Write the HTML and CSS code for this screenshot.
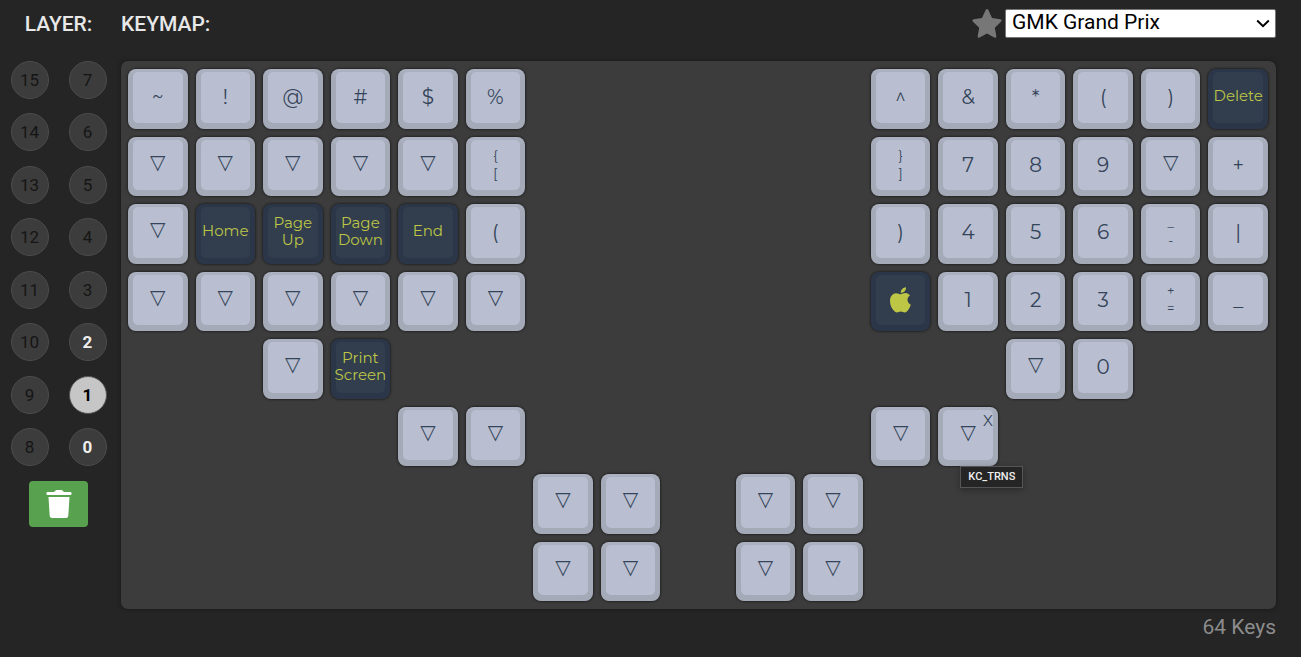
FILE: index.html
```html
<!DOCTYPE html>
<html lang="en">
<head>
<meta charset="utf-8">
<meta name="viewport" content="width=device-width, initial-scale=1">
<title>Keymap</title>
<link rel="stylesheet" href="styles.css">
</head>
<body>
<main class="configurator">
  <aside class="layers">
    <h2 class="heading layers-heading">LAYER:</h2>
    <div class="layer-list">
      <button class="layer" type="button">15</button><button class="layer" type="button">7</button>
      <button class="layer" type="button">14</button><button class="layer" type="button">6</button>
      <button class="layer" type="button">13</button><button class="layer" type="button">5</button>
      <button class="layer" type="button">12</button><button class="layer" type="button">4</button>
      <button class="layer" type="button">11</button><button class="layer" type="button">3</button>
      <button class="layer" type="button">10</button><button class="layer used" type="button">2</button>
      <button class="layer" type="button">9</button><button class="layer active" type="button" aria-pressed="true">1</button>
      <button class="layer" type="button">8</button><button class="layer used" type="button">0</button>
    </div>
    <button class="clear" type="button" aria-label="Clear layer">
      <svg class="clear-icon" viewBox="0 0 26 28" aria-hidden="true"><path d="M1.500 2H8L9.500 0.500Q10 0 10.700 0H15.300Q16 0 16.500 0.500L18 2H24.500Q25.500 2 25.500 3V4Q25.500 5 24.500 5H1.500Q0.500 5 0.500 4V3Q0.500 2 1.500 2ZM2.500 7H23.500L22.300 26Q22.100 28 20 28H6Q3.900 28 3.700 26Z"/></svg>
    </button>
  </aside>
  <section class="keymap">
    <header class="toolbar">
      <h2 class="heading">KEYMAP:</h2>
      <div class="theme">
        <svg class="star" viewBox="0 0 30 29" role="img" aria-label="Favorite"><path d="M13.500 1.200Q15 -1 16.500 1.200L20 9 28.200 10.200Q30.600 10.700 29 12.700L22.800 18.700 24.300 27Q24.500 29.400 22.300 28.400L15 24.500 7.700 28.400Q5.500 29.400 5.700 27L7.200 18.700 1 12.700Q-0.600 10.700 1.800 10.200L10 9Z"/></svg>
        <div class="select-wrap">
          <select class="theme-select" aria-label="Keycap theme"><option>GMK Grand Prix</option></select>
          <svg class="chevron" viewBox="0 0 14 9" aria-hidden="true"><path d="M1.200 1.500 7 7.200 12.800 1.500"/></svg>
        </div>
      </div>
    </header>
    <div class="board">
      <button class="key" type="button"><span class="face">~</span></button>
      <button class="key" type="button"><span class="face">!</span></button>
      <button class="key" type="button"><span class="face">@</span></button>
      <button class="key" type="button"><span class="face">#</span></button>
      <button class="key" type="button"><span class="face">$</span></button>
      <button class="key" type="button"><span class="face">%</span></button>
      <button class="key col-12" type="button"><span class="face">^</span></button>
      <button class="key" type="button"><span class="face">&amp;</span></button>
      <button class="key" type="button"><span class="face">*</span></button>
      <button class="key" type="button"><span class="face">(</span></button>
      <button class="key" type="button"><span class="face">)</span></button>
      <button class="key accent" type="button"><span class="face word">Delete</span></button>

      <button class="key" type="button"><span class="face trns">▽</span></button>
      <button class="key" type="button"><span class="face trns">▽</span></button>
      <button class="key" type="button"><span class="face trns">▽</span></button>
      <button class="key" type="button"><span class="face trns">▽</span></button>
      <button class="key" type="button"><span class="face trns">▽</span></button>
      <button class="key" type="button"><span class="face pair">{<br>[</span></button>
      <button class="key col-12" type="button"><span class="face pair">}<br>]</span></button>
      <button class="key" type="button"><span class="face">7</span></button>
      <button class="key" type="button"><span class="face">8</span></button>
      <button class="key" type="button"><span class="face">9</span></button>
      <button class="key" type="button"><span class="face trns">▽</span></button>
      <button class="key" type="button"><span class="face">+</span></button>

      <button class="key" type="button"><span class="face trns">▽</span></button>
      <button class="key accent" type="button"><span class="face word">Home</span></button>
      <button class="key accent" type="button"><span class="face word">Page<br>Up</span></button>
      <button class="key accent" type="button"><span class="face word">Page<br>Down</span></button>
      <button class="key accent" type="button"><span class="face word">End</span></button>
      <button class="key" type="button"><span class="face">(</span></button>
      <button class="key col-12" type="button"><span class="face">)</span></button>
      <button class="key" type="button"><span class="face">4</span></button>
      <button class="key" type="button"><span class="face">5</span></button>
      <button class="key" type="button"><span class="face">6</span></button>
      <button class="key" type="button"><span class="face pair">_<br>-</span></button>
      <button class="key" type="button"><span class="face">|</span></button>

      <button class="key" type="button"><span class="face trns">▽</span></button>
      <button class="key" type="button"><span class="face trns">▽</span></button>
      <button class="key" type="button"><span class="face trns">▽</span></button>
      <button class="key" type="button"><span class="face trns">▽</span></button>
      <button class="key" type="button"><span class="face trns">▽</span></button>
      <button class="key" type="button"><span class="face trns">▽</span></button>
      <button class="key accent col-12" type="button" aria-label="Command"><span class="face"><svg class="apple" viewBox="0 0 21 26" aria-hidden="true"><path d="M16 0.300C16.300 3.300 13.700 6 10.700 6 10.500 3.200 13 0.600 16 0.300ZM10.600 7.300C11.900 7.300 13.100 6.100 15.400 6.100 17.300 6.100 19 7 20 8.500 16.300 10.700 16.800 16.100 20.800 17.700 20 20.400 18.200 23.400 16.600 24.800 14.500 26.600 13 24.600 10.700 24.600 8.300 24.600 7.200 26.500 5 24.800 1.700 22.200 0 17.900 0 14 0 9.300 2.700 6.300 6.200 6.200 8.300 6.200 9.400 7.300 10.600 7.300Z"/></svg></span></button>
      <button class="key" type="button"><span class="face">1</span></button>
      <button class="key" type="button"><span class="face">2</span></button>
      <button class="key" type="button"><span class="face">3</span></button>
      <button class="key" type="button"><span class="face pair">+<br>=</span></button>
      <button class="key" type="button"><span class="face">_</span></button>

      <button class="key col-3" type="button"><span class="face trns">▽</span></button>
      <button class="key accent" type="button"><span class="face word">Print<br>Screen</span></button>
      <button class="key col-14" type="button"><span class="face trns">▽</span></button>
      <button class="key" type="button"><span class="face">0</span></button>

      <button class="key col-5" type="button"><span class="face trns">▽</span></button>
      <button class="key" type="button"><span class="face trns">▽</span></button>
      <button class="key col-12" type="button"><span class="face trns">▽</span></button>
      <div class="hovered">
        <button class="key" type="button" aria-describedby="keycode"><span class="face trns">▽</span></button>
        <button class="remove" type="button" aria-label="Remove keycode">X</button>
        <span class="tooltip" id="keycode" role="tooltip">KC_TRNS</span>
      </div>

      <button class="key col-7" type="button"><span class="face trns">▽</span></button>
      <button class="key" type="button"><span class="face trns">▽</span></button>
      <button class="key col-10" type="button"><span class="face trns">▽</span></button>
      <button class="key" type="button"><span class="face trns">▽</span></button>

      <button class="key col-7" type="button"><span class="face trns">▽</span></button>
      <button class="key" type="button"><span class="face trns">▽</span></button>
      <button class="key col-10" type="button"><span class="face trns">▽</span></button>
      <button class="key" type="button"><span class="face trns">▽</span></button>
    </div>
    <p class="count">64 Keys</p>
  </section>
</main>
</body>
</html>
```

FILE: styles.css
```css
* {
  box-sizing: border-box;
}

body {
  margin: 0;
  background: #252525;
  color: #e8e8e8;
  font-family: Roboto, "Liberation Sans", sans-serif;
}

button {
  margin: 0;
  padding: 0;
  border: 0;
  background: none;
  color: inherit;
  font: inherit;
  cursor: pointer;
}

.configurator {
  display: flex;
  align-items: stretch;
  padding-right: 25px;
}

.layers {
  flex: 0 0 121px;
  display: flex;
  flex-direction: column;
  align-items: center;
  padding-right: 4px;
}

.heading {
  margin: 0;
  font-size: 21px;
  font-weight: 500;
  line-height: 24px;
}

.layers-heading {
  height: 61px;
  padding-top: 12px;
}

.layer-list {
  display: grid;
  grid-template-columns: 38px 38px;
  column-gap: 20px;
  align-content: space-between;
  height: 405px;
}

.layer {
  height: 38px;
  border: 1px solid #4c4c4c;
  border-radius: 50%;
  background: #3c3c3c;
  color: #151515;
  font-size: 17px;
  line-height: 34px;
}

.layer.used {
  color: #eee;
  font-weight: 700;
}

.layer.active {
  border-color: #555;
  background: #c6c6c6;
  color: #000;
  font-weight: 700;
}

.clear {
  display: grid;
  place-items: center;
  width: 59px;
  height: 46px;
  margin-top: 15px;
  border-radius: 4px;
  background: #58a14e;
}

.clear-icon {
  width: 26px;
  height: 28px;
  fill: #fff;
}

.keymap {
  flex: 1;
  min-width: 0;
}

.toolbar {
  display: flex;
  align-items: flex-start;
  justify-content: space-between;
  height: 61px;
}

.toolbar .heading {
  padding-top: 12px;
}

.theme {
  display: flex;
  align-items: flex-start;
  gap: 3px;
  padding-top: 9px;
}

.star {
  width: 30px;
  height: 29px;
  fill: #777;
}

.select-wrap {
  position: relative;
}

.theme-select {
  display: block;
  appearance: none;
  width: 271px;
  height: 29px;
  padding: 0 24px 3px 6px;
  border: 1px solid #767676;
  border-radius: 2px;
  background: #fff;
  color: #000;
  font-family: Roboto, "Liberation Sans", sans-serif;
  font-size: 21px;
}

.chevron {
  position: absolute;
  top: 10px;
  right: 6px;
  width: 14px;
  height: 9px;
  fill: none;
  stroke: #000;
  stroke-width: 2;
  pointer-events: none;
}

.board {
  display: grid;
  grid-template-columns: repeat(17, minmax(0, 1fr));
  gap: 8px;
  padding: 8px 8px 8px 7px;
  border-radius: 7px;
  background: #3c3c3c;
  box-shadow: 0 0 4px #181818;
}

.key {
  aspect-ratio: 1;
  display: flex;
  min-width: 0;
  padding: 3px 5px 6px;
  border-radius: 8px;
  background: linear-gradient(#adb3c2, #a4aab8 8px);
  box-shadow: 0 0 2px 1px #252525;
  color: #34445a;
}

.face {
  flex: 1;
  display: flex;
  align-items: center;
  justify-content: center;
  min-width: 0;
  border-radius: 5px;
  background: #b9bfd0;
  font-family: Montserrat, Inter, "Open Sans", sans-serif;
  font-size: 20px;
  font-weight: 400;
  line-height: 20px;
}

.trns {
  padding-bottom: 6px;
  font-family: "DejaVu Sans", sans-serif;
}

.word {
  padding-bottom: 3px;
  font-size: 15px;
  line-height: 17px;
}

.pair {
  padding-bottom: 2px;
  font-size: 13px;
  line-height: 18px;
}

.key.accent {
  background: #2b3748;
  color: #bdc645;
}

.accent .face {
  background: #323e4e;
}

.apple {
  width: 21px;
  height: 26px;
  fill: currentColor;
}

.hovered {
  position: relative;
  display: grid;
}

.remove {
  position: absolute;
  top: 4px;
  right: 5px;
  color: #34445a;
  font-family: Montserrat, Inter, "Open Sans", sans-serif;
  font-size: 15px;
  line-height: 20px;
}

.tooltip {
  position: absolute;
  top: 59px;
  left: 22px;
  z-index: 1;
  padding: 2px 7px;
  border: 1px solid #555;
  background: #252525;
  box-shadow: 0 2px 6px rgba(0, 0, 0, 0.3);
  color: #eee;
  font-size: 11px;
  font-weight: 500;
  line-height: 16px;
}

.count {
  margin: 0;
  padding-top: 6px;
  color: #8c8c8c;
  font-size: 21px;
  line-height: 24px;
  text-align: right;
}

.col-3 { grid-column-start: 3; }
.col-5 { grid-column-start: 5; }
.col-7 { grid-column-start: 7; }
.col-10 { grid-column-start: 10; }
.col-12 { grid-column-start: 12; }
.col-14 { grid-column-start: 14; }
```
